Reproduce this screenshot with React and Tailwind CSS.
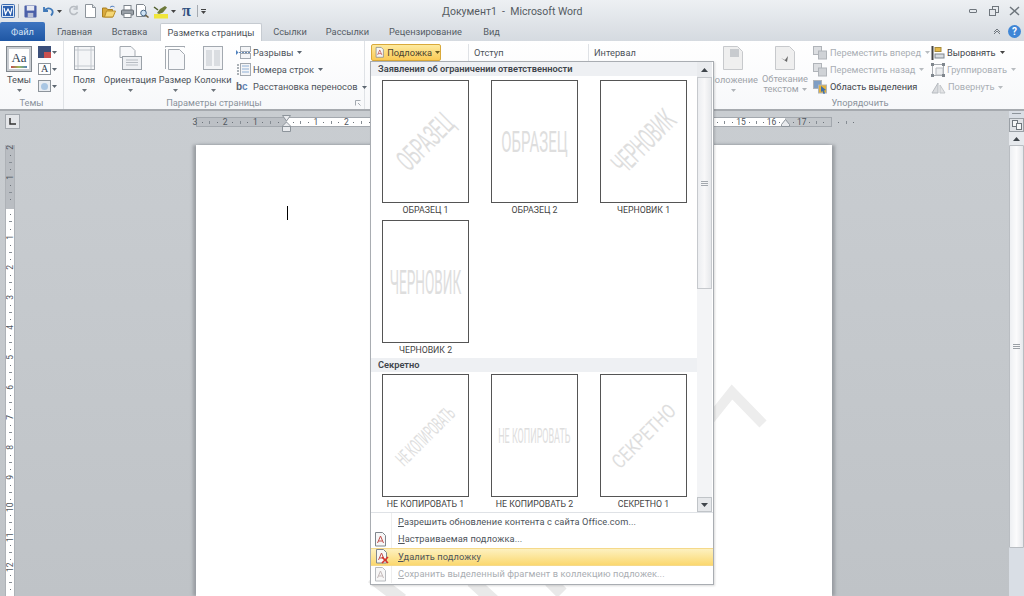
const Caret = ({ color = '#5c6670', className = '' }) => (
  <svg width="5" height="3" viewBox="0 0 5 3" className={`shrink-0 ${className}`}>
    <path d="M0 0h5L2.5 3z" fill={color} />
  </svg>
)

const WordIcon = () => (
  <svg width="14" height="14" viewBox="0 0 14 14" className="shrink-0">
    <rect x="0.5" y="0.5" width="13" height="13" rx="1" fill="#dbe6f5" stroke="#3a6bb0" />
    <rect x="2" y="2" width="10" height="10" fill="#2b5fae" />
    <path d="M3 4l1.5 6L7 5l2.5 5L11 4" fill="none" stroke="#fff" strokeWidth="1.2" />
  </svg>
)

const SaveIcon = () => (
  <svg width="13" height="13" viewBox="0 0 14 14" className="shrink-0">
    <rect x="0.5" y="0.5" width="13" height="13" rx="1" fill="#4a5fa8" />
    <rect x="3" y="1" width="8" height="5" fill="#e6e9f2" />
    <rect x="4" y="8.5" width="6" height="5" fill="#b9c0d6" />
  </svg>
)

const UndoIcon = ({ color }) => (
  <svg width="12" height="12" viewBox="0 0 12 12" className="shrink-0">
    <path d="M2 2v4h4M2.5 6C4 3 8 2.5 10 5c1 1.5.5 4-1 5.5" fill="none" stroke={color} strokeWidth="1.8" />
  </svg>
)

const RedoIcon = () => (
  <svg width="11" height="12" viewBox="0 0 11 12" className="shrink-0">
    <path d="M8.5 2.5A4 4 0 1 0 9.5 7M9 .5v3.5H5.5" fill="none" stroke="#b7bcc2" strokeWidth="1.6" />
  </svg>
)

const NewIcon = () => (
  <svg width="11" height="14" viewBox="0 0 11 14" className="shrink-0">
    <path d="M.5.5h7l3 3v10H.5z" fill="#fff" stroke="#8d949b" />
    <path d="M7.5.5v3h3" fill="#dfe3e8" stroke="#8d949b" />
  </svg>
)

const OpenIcon = () => (
  <svg width="14" height="13" viewBox="0 0 14 13" className="shrink-0">
    <path d="M.5 3h4l1 1.5h5v7.500H.5z" fill="#d9a93a" stroke="#a97f20" />
    <path d="M2.5 12l2-6h9l-2.5 6z" fill="#f6d774" stroke="#b98d2a" />
    <path d="M8 2.5C9 1 11 .8 12.5 2" fill="none" stroke="#4d7cc0" />
  </svg>
)

const PrintIcon = () => (
  <svg width="13" height="13" viewBox="0 0 13 13" className="shrink-0">
    <rect x="3" y="0.5" width="7" height="5" fill="#fff" stroke="#7f868d" />
    <rect x="0.5" y="5" width="12" height="5" rx="1" fill="#9aa1a8" stroke="#666d74" />
    <rect x="3" y="8.5" width="7" height="4" fill="#fff" stroke="#7f868d" />
  </svg>
)

const PreviewIcon = () => (
  <svg width="13" height="14" viewBox="0 0 13 14" className="shrink-0">
    <path d="M.5.5h7l2 2v10H.5z" fill="#fff" stroke="#7f868d" />
    <circle cx="7.5" cy="9" r="2.8" fill="#cfe3f5" stroke="#4a6a8a" />
    <path d="M9.5 11l3 2.5" stroke="#6b5a3a" strokeWidth="1.5" />
  </svg>
)

const PenIcon = () => (
  <svg width="16" height="15" viewBox="0 0 16 15" className="shrink-0">
    <rect x="1" y="10" width="14" height="4.5" fill="#f0e63a" />
    <path d="M4 9l3-4 5-3 2 1.5-4 5-4 1.500z" fill="#6d7a3a" />
    <path d="M1 3l4 3" stroke="#4f5d2a" strokeWidth="1.5" />
  </svg>
)

const ThemesIcon = () => (
  <div className="flex h-[26px] w-[26px] items-center justify-center border border-[#7f868d] bg-[#c9cdd2] p-[2px]">
    <div className="flex h-full w-full flex-col items-center justify-center bg-white font-['Liberation_Serif',serif] text-[13px] leading-none text-[#30404f]">
      Aa
      <span className="mt-[2px] h-[2px] w-[16px] bg-[linear-gradient(90deg,#c0504d,#9bbb59,#4f81bd)]" />
    </div>
  </div>
)

const MarginsIcon = () => (
  <svg width="21" height="24" viewBox="0 0 21 24">
    <rect x="0.5" y="0.5" width="20" height="23" fill="#f4f5f7" stroke="#a3a9b0" />
    <path d="M4 1v22M17 1v22M1 4h19M1 20h19" stroke="#c4c9cf" />
  </svg>
)

const OrientIcon = () => (
  <svg width="23" height="24" viewBox="0 0 23 24">
    <path d="M1 .5h11l4 4v7H1z" fill="#f7f8fa" stroke="#a3a9b0" />
    <rect x="3.5" y="10.5" width="19" height="13" fill="#eef0f3" stroke="#9aa1a8" />
    <path d="M7 14h12M7 16.5h12M7 19h12" stroke="#b7bcc2" />
  </svg>
)

const SizeIcon = () => (
  <svg width="20" height="24" viewBox="0 0 20 24">
    <path d="M0 .5h20M0 0v2M20 0v2" stroke="#a3a9b0" />
    <path d="M.5 3v20" stroke="#a3a9b0" />
    <path d="M3.5 3.5h11l5 5v15h-16z" fill="#f7f8fa" stroke="#a3a9b0" />
  </svg>
)

const ColumnsIcon = () => (
  <svg width="20" height="24" viewBox="0 0 20 24">
    <rect x="0.5" y="0.5" width="19" height="23" fill="#f4f5f7" stroke="#a3a9b0" />
    <path d="M3 5h6M3 7h6M3 9h6M3 11h6M3 13h6M3 15h6M3 17h6M3 19h6M11 5h6M11 7h6M11 9h6M11 11h6M11 13h6M11 15h6M11 17h6M11 19h6" stroke="#c0c5cb" />
  </svg>
)

const PageDisabledIcon = ({ glyph }) => (
  <svg width="20" height="24" viewBox="0 0 20 24">
    <path d="M.5.5h14l5 5v18H.5z" fill="#efefef" stroke="#c7c9cc" />
    {glyph === 'pos' && <rect x="7" y="3" width="9" height="8" fill="#c8cbcf" />}
    {glyph === 'wrap' && <path d="M6 12l4 2 3-4-1 6z" fill="#666" />}
  </svg>
)

const SmallRowIcon = ({ kind }) => {
  if (kind === 'breaks') {
    return (
      <svg width="15" height="13" viewBox="0 0 15 13" className="shrink-0">
        <rect x="4.5" y="0.5" width="10" height="5" fill="#f4f5f7" stroke="#a3a9b0" />
        <rect x="4.5" y="7.5" width="10" height="5" fill="#f4f5f7" stroke="#a3a9b0" />
        <path d="M0 6.5h15" stroke="#6b8cb5" strokeDasharray="2 1" />
        <path d="M0 4l2.5 2.5L0 9" fill="#4f81bd" />
      </svg>
    )
  }
  if (kind === 'lines') {
    return (
      <svg width="15" height="13" viewBox="0 0 15 13" className="shrink-0">
        <rect x="4.5" y="0.5" width="10" height="12" fill="#f4f5f7" stroke="#a3a9b0" />
        <path d="M1 2h2M1 5h2M1 8h2M1 11h2" stroke="#5b6670" />
        <path d="M6 3h7M6 6h7M6 9h7" stroke="#8fb0d6" />
      </svg>
    )
  }
  if (kind === 'hyphen') {
    return <span className="w-[15px] shrink-0 font-['Liberation_Sans',sans-serif] text-[10px] font-bold leading-none text-[#5a6470]">b<span className="text-[#5f86b8]">c</span></span>
  }
  const fill = kind === 'select' ? '#e3b23c' : '#cfd2d6'
  const back = kind === 'select' ? '#7f9ec4' : '#dcdee1'
  return (
    <svg width="15" height="14" viewBox="0 0 15 14" className="shrink-0">
      <rect x="0.5" y="0.5" width="8" height="8" fill={back} stroke="#b0b4b9" />
      <rect x="5.5" y="5" width="8" height="8" fill={fill} stroke="#b0b4b9" />
      {kind === 'select' && <path d="M8 6l5 4-2 .5 1 3-1.5.5-1-3-1.5 1z" fill="#3f6fa8" />}
    </svg>
  )
}

const ArrangeIcon = ({ kind }) => {
  if (kind === 'align') {
    return (
      <svg width="14" height="14" viewBox="0 0 14 14" className="shrink-0">
        <path d="M1.5 0v14" stroke="#444" strokeWidth="2" />
        <rect x="4" y="1.5" width="6" height="4" fill="#e5b84a" stroke="#a58a3a" />
        <rect x="4" y="8" width="9" height="4" fill="#d8dce1" stroke="#7f868d" />
      </svg>
    )
  }
  if (kind === 'group') {
    return (
      <svg width="14" height="14" viewBox="0 0 14 14" className="shrink-0">
        <rect x="1.5" y="1.5" width="11" height="11" fill="none" stroke="#a9adb2" />
        <path d="M5 5h7v7H5z" fill="#eceef0" stroke="#b7bbc0" />
        <path d="M0 0h3v3H0zM11 0h3v3h-3zM0 11h3v3H0zM11 11h3v3h-3z" fill="#7f868d" />
      </svg>
    )
  }
  return (
    <svg width="15" height="13" viewBox="0 0 15 13" className="shrink-0">
      <path d="M7 2L1 12h6z" fill="#dadcdf" stroke="#b7bbc0" />
      <path d="M9 4l5 8H9z" fill="#e4e5e7" stroke="#c2c5c9" />
    </svg>
  )
}

const BigButton = ({ width, label, icon, gray, caret = true }) => (
  <div className={`flex shrink-0 flex-col items-center pt-[5px] ${width}`}>
    <div className="flex h-[26px] items-start">{icon}</div>
    <div className={`mt-[2px] whitespace-nowrap text-center text-[9.25px] leading-[12px] ${gray ? 'text-[#9ea3a9]' : 'text-[#4d535a]'}`}>{label}</div>
    {caret && <Caret className="mt-[3px]" color={gray ? '#b0b4b9' : '#6d747b'} />}
  </div>
)

const SmallRow = ({ icon, label, color = 'text-[#4d535a]', caret = true, caretColor }) => (
  <div className="flex h-[17.5px] items-center whitespace-nowrap">
    {icon}
    <span className={`ml-[2px] text-[9.25px] leading-[12px] ${color}`}>{label}</span>
    {caret && <Caret className="ml-[4px]" color={caretColor} />}
  </div>
)

const GroupLabel = ({ children }) => (
  <div className="h-[13px] text-center text-[9.25px] leading-[13px] text-[#8a929b]">{children}</div>
)

const Tab = ({ label, width }) => (
  <div className={`shrink-0 text-center text-[9.25px] leading-[19px] text-[#555c64] ${width}`}>{label}</div>
)

const Ticks = ({ label, vertical }) => (
  <div className={`flex shrink-0 items-center ${vertical ? 'h-[30px] w-full flex-col' : 'h-full w-[30.3px]'}`}>
    <span className={`flex flex-1 items-center justify-center text-[8.5px] leading-none text-[#4f565d] ${vertical ? '-rotate-90' : ''}`}>{label}</span>
    <span className="flex flex-1 items-center justify-center"><i className="block h-px w-px bg-[#6d747b]" /></span>
    <span className="flex flex-1 items-center justify-center"><i className={`block bg-[#868d94] ${vertical ? 'h-px w-[3px]' : 'h-[3px] w-px'}`} /></span>
    <span className="flex flex-1 items-center justify-center"><i className="block h-px w-px bg-[#6d747b]" /></span>
  </div>
)

// cells under the open menu stay unnumbered
const H_CELLS = ['3', '2', '1', '', '1', '2', '', '', '', '', '', '', '', '', '', '', '', '', '15', '16', '17', '']
const V_NUMBERS = ['2', '1', '', '1', '2', '3', '4', '5', '6', '7', '8', '9', '10', '11', '12', '']

const Thumb = ({ name, mark, markClass }) => (
  <div className="flex w-[87px] flex-col items-center">
    <div className="flex h-[123px] w-[87px] items-center justify-center overflow-hidden border-[1.5px] border-[#555] bg-white">
      <span className={`shrink-0 whitespace-nowrap leading-none text-[#dedede] ${markClass}`}>{mark}</span>
    </div>
    <div className="h-[14px] whitespace-nowrap text-center text-[8.75px] leading-[14px] text-[#444]">{name}</div>
  </div>
)

const GalleryHeader = ({ children }) => (
  <div className="h-[14px] bg-[#eef0f3] pl-[7px] text-[9.25px] font-semibold leading-[14px] text-[#3f454b]">{children}</div>
)

const MenuItem = ({ icon, first, rest, active, disabled }) => (
  <div className={`flex h-[17.5px] items-center ${active ? 'border-y border-[#f5d98a] bg-[linear-gradient(#fdf1c0,#fbd86f)]' : ''}`}>
    <div className={`mr-[6px] flex h-full w-[21px] shrink-0 items-center justify-center ${active ? '' : 'border-r border-[#eeeeee]'}`}>{icon}</div>
    <span className={`whitespace-nowrap text-[9.25px] tracking-[0.1px] ${disabled ? 'text-[#a9adb2]' : 'text-[#4d535a]'}`}>
      <span className="underline">{first}</span>{rest}
    </span>
  </div>
)

const WatermarkDocIcon = ({ del, gray }) => (
  <svg width="14" height="15" viewBox="0 0 14 15">
    <path d="M1.5.5h7l3 3v10.500h-10z" fill="#f7f7f7" stroke={gray ? '#b8bbbf' : '#7f868d'} />
    <path d="M3.5 11l3-7 3 7M4.5 9h4" fill="none" stroke={gray ? '#c4b9b9' : '#c0504d'} />
    {del && <path d="M7 8l6 6M13 8l-6 6" stroke="#d8342a" strokeWidth="1.6" />}
  </svg>
)

const App = () => {
  return (
    <div className="relative flex h-[596px] w-[1024px] flex-col overflow-hidden bg-[#c5c9cd] font-['Roboto',sans-serif]">
      {/* title bar + tabs */}
      <div className="bg-[linear-gradient(#edf0f3,#d5dae0)]">
        <div className="flex h-[22px] items-center">
          <div className="flex w-[442px] shrink-0 items-center pl-[1px]">
            <WordIcon />
            <span className="ml-[3px] mr-[5px] h-[14px] w-px bg-[#b0b5ba]" />
            <SaveIcon />
            <span className="ml-[5px]"><UndoIcon color="#3f78b8" /></span>
            <Caret className="ml-[3px]" color="#444" />
            <span className="ml-[6px]"><RedoIcon /></span>
            <span className="ml-[6px]"><NewIcon /></span>
            <span className="ml-[6px]"><OpenIcon /></span>
            <span className="ml-[5px]"><PrintIcon /></span>
            <span className="ml-[2px]"><PreviewIcon /></span>
            <span className="ml-[4px]"><PenIcon /></span>
            <Caret className="ml-[2px]" color="#444" />
            <span className="ml-[6px] font-['Liberation_Serif',serif] text-[16px] font-bold leading-none text-[#2f4f7f]">π</span>
            <span className="ml-[6px] h-[12px] w-px bg-[#a5aab0]" />
            <div className="ml-[3px] flex flex-col items-center gap-px"><span className="h-px w-[5px] bg-[#444]" /><Caret color="#444" /></div>
          </div>
          <span className="mt-[1px] whitespace-pre text-[10.5px] text-[#555b62]">Документ1  -  Microsoft Word</span>
          <div className="ml-auto flex items-center pr-[4px]">
            <span className="h-[4px] w-[8px] rounded-[1px] border border-[#6f767d]" />
            <svg width="10" height="10" viewBox="0 0 10 10" className="ml-[12px]">
              <rect x="3.5" y="0.5" width="6" height="6" fill="none" stroke="#6f767d" />
              <rect x="0.5" y="3.5" width="6" height="6" fill="#e5e8ec" stroke="#6f767d" />
            </svg>
            <svg width="11" height="10" viewBox="0 0 11 10" className="ml-[10px]">
              <path d="M1 1l9 8M10 1L1 9" stroke="#6f767d" strokeWidth="1.5" />
            </svg>
          </div>
        </div>
        <div className="flex h-[19px] items-end">
          <div className="h-[19px] w-[45px] shrink-0 rounded-t-[2px] bg-[linear-gradient(#3d74c0,#1f57a4)] text-center text-[9.25px] leading-[19px] text-[#d5e3f5]">Файл</div>
          <Tab label="Главная" width="ml-[5px] w-[49px]" />
          <Tab label="Вставка" width="w-[61px]" />
          <div className="h-[18px] w-[102px] shrink-0 rounded-t-[2px] border border-b-0 border-[#c6cbd1] bg-white text-center text-[9.25px] leading-[17px] text-[#4d535a]">Разметка страницы</div>
          <Tab label="Ссылки" width="w-[56px]" />
          <Tab label="Рассылки" width="w-[59px]" />
          <Tab label="Рецензирование" width="w-[97px]" />
          <Tab label="Вид" width="w-[35px]" />
          <div className="ml-auto flex h-[19px] items-center pr-[3px]">
            <svg width="8" height="6" viewBox="0 0 8 6">
              <path d="M1 5l3-3 3 3M1 3l3-3 3 3" fill="none" stroke="#6f767d" />
            </svg>
            <span className="ml-[7px] flex h-[13px] w-[13px] items-center justify-center rounded-full bg-[#3f86d6] text-[10px] font-bold leading-none text-white">?</span>
          </div>
        </div>
      </div>

      {/* ribbon */}
      <div className="flex h-[70px] shrink-0 border-b-2 border-[#a6aaaf] bg-[linear-gradient(#ffffff,#f7f8fa)]">
        <div className="flex w-[64px] shrink-0 flex-col border-r border-[#dfe2e6]">
          <div className="flex h-[55px] pl-[6px]">
            <BigButton width="w-[26px]" label="Темы" icon={<ThemesIcon />} />
            <div className="ml-[6px] flex flex-col gap-[5px] pt-[5px]">
              <div className="flex items-center gap-[1px]">
                <svg width="13" height="12" viewBox="0 0 13 12"><rect width="13" height="6" fill="#3b4f7a" /><rect y="6" width="6" height="6" fill="#3b4f7a" /><rect x="6" y="6" width="7" height="6" fill="#c9504f" /></svg>
                <Caret />
              </div>
              <div className="flex items-center gap-[1px]">
                <span className="flex h-[12px] w-[13px] items-center justify-center border border-[#8d949b] bg-white font-['Liberation_Serif',serif] text-[10px] leading-none text-[#30404f]">A</span>
                <Caret />
              </div>
              <div className="flex items-center gap-[1px]">
                <span className="flex h-[12px] w-[13px] items-center justify-center border border-[#8d949b] bg-[#e9edf2]"><span className="h-[7px] w-[7px] rounded-full bg-[#a9c6e3]" /></span>
                <Caret />
              </div>
            </div>
          </div>
          <GroupLabel>Темы</GroupLabel>
        </div>

        <div className="flex w-[301px] shrink-0 flex-col border-r border-[#dfe2e6]">
          <div className="flex h-[55px] pl-[4px]">
            <BigButton width="w-[32px]" label="Поля" icon={<MarginsIcon />} />
            <BigButton width="w-[60px]" label="Ориентация" icon={<OrientIcon />} />
            <BigButton width="w-[30px]" label="Размер" icon={<SizeIcon />} />
            <BigButton width="w-[46px]" label="Колонки" icon={<ColumnsIcon />} />
            <div className="flex flex-col pt-[3px]">
              <SmallRow icon={<SmallRowIcon kind="breaks" />} label="Разрывы" />
              <SmallRow icon={<SmallRowIcon kind="lines" />} label="Номера строк" />
              <SmallRow icon={<SmallRowIcon kind="hyphen" />} label="Расстановка переносов" />
            </div>
          </div>
          <div className="relative">
            <GroupLabel>Параметры страницы</GroupLabel>
            <svg width="6" height="6" viewBox="0 0 6 6" className="absolute right-[3px] top-[4px]">
              <path d="M.5 5.500v-5h5M3 3l2.500 2.500" fill="none" stroke="#a3a9b0" />
            </svg>
          </div>
        </div>

        {/* fon + paragraph, mostly under the menu */}
        <div className="flex w-[340px] shrink-0 items-start pt-[3px] text-[9.25px] leading-[17px] text-[#4d535a]">
          <div className="ml-[6px] flex h-[17px] w-[70px] shrink-0 items-center rounded-[2px] border border-[#d9a93a] bg-[linear-gradient(#fdeaa0,#fbca55)] pl-[3px]">
            <WatermarkDocIcon />
            <span className="ml-[2px] text-[#4a4230]">Подложка</span>
            <Caret className="ml-[3px]" color="#6b5a20" />
          </div>
          <span className="ml-[27px] h-[17px] w-px shrink-0 bg-[#dfe2e6]" />
          <span className="ml-[5px] w-[114px] shrink-0">Отступ</span>
          <span className="h-[17px] w-px shrink-0 bg-[#dfe2e6]" />
          <span className="ml-[5px]">Интервал</span>
        </div>

        <div className="flex w-[310px] shrink-0 flex-col">
          <div className="flex h-[55px]">
            <BigButton width="w-[56px]" label="Положение" gray icon={<PageDisabledIcon glyph="pos" />} />
            <BigButton
              width="w-[48px]"
              gray
              caret={false}
              icon={<PageDisabledIcon glyph="wrap" />}
              label={<span className="block leading-[10px]">Обтекание<br /><span className="inline-flex items-center gap-[3px]">текстом <Caret color="#b0b4b9" /></span></span>}
            />
            <div className="ml-[4px] flex w-[118px] shrink-0 flex-col pt-[3px]">
              <SmallRow icon={<SmallRowIcon kind="forward" />} label="Переместить вперед" color="text-[#a9aeb4]" caretColor="#b8bcc0" />
              <SmallRow icon={<SmallRowIcon kind="back" />} label="Переместить назад" color="text-[#a9aeb4]" caretColor="#b8bcc0" />
              <SmallRow icon={<SmallRowIcon kind="select" />} label="Область выделения" caret={false} color="text-[#3f454b]" />
            </div>
            <div className="flex shrink-0 flex-col pt-[3px]">
              <SmallRow icon={<ArrangeIcon kind="align" />} label="Выровнять" color="text-[#3f454b]" caretColor="#444" />
              <SmallRow icon={<ArrangeIcon kind="group" />} label="Группировать" color="text-[#a9aeb4]" caretColor="#b8bcc0" />
              <SmallRow icon={<ArrangeIcon kind="rotate" />} label="Повернуть" color="text-[#a9aeb4]" caretColor="#b8bcc0" />
            </div>
          </div>
          <GroupLabel>Упорядочить</GroupLabel>
        </div>
      </div>

      {/* work area */}
      <div className="flex min-h-0 flex-1 bg-[linear-gradient(#c9cdd1,#bfc3c7)]">
        <div className="flex w-[196px] shrink-0 flex-col pl-[5px] pt-[3px]">
          <div className="flex h-[15px] w-[15px] items-center justify-center border border-[#a3a8ae] bg-[#e4e6e9]">
            <svg width="7" height="7" viewBox="0 0 7 7"><path d="M1 0v6h6" fill="none" stroke="#333" strokeWidth="1.5" /></svg>
          </div>
          <div className="relative mt-[16px] h-[452px] w-[10px] overflow-hidden border-x border-[#aeb2b7]">
            <div className="h-[64px] bg-[#b9bdc2]" />
            <div className="h-full bg-white" />
            <div className="absolute inset-x-0 top-[-2px] flex flex-col">
              {V_NUMBERS.map((n, i) => <Ticks key={i} label={n} vertical />)}
            </div>
          </div>
        </div>

        <div className="flex w-[636px] shrink-0 flex-col">
          <div className="relative mt-[6px] flex h-[10px] shrink-0 border border-[#a3a8ae]">
            <div className="w-[90px] shrink-0 bg-[#bcc0c5]" />
            <div className="w-[498px] shrink-0 bg-white" />
            <div className="flex-1 bg-[#c3c7cb]" />
            <div className="absolute inset-y-0 left-[-6px] flex">
              {H_CELLS.map((n, i) => <Ticks key={i} label={n} />)}
            </div>
            <svg width="9" height="18" viewBox="0 0 9 18" className="absolute left-[85px] top-[-3px]">
              <path d="M.5.5h8L4.5 6zM4.500 7l4 4v5.500h-8V11z" fill="#e8eaed" stroke="#8d949b" />
              <path d="M.5 11.500h8" stroke="#8d949b" />
            </svg>
            <svg width="9" height="8" viewBox="0 0 9 8" className="absolute left-[584px] top-[1px]">
              <path d="M4.5.5l4 5v2h-8v-2z" fill="#e8eaed" stroke="#8d949b" />
            </svg>
          </div>
          <div className="relative mt-[18px] flex-1 bg-white pl-[91px] pt-[61px] shadow-[-3px_0_3px_#9a9ea3,3px_0_3px_#9a9ea3]">
            <svg width="636" height="451" viewBox="0 0 636 451" className="absolute left-0 top-0">
              <path d="M500 292L536 247L567 279" fill="none" stroke="#ededed" strokeWidth="10" />
              <path d="M176 432L206 455M276 436L300 458M354 436L366 448" fill="none" stroke="#e9e9e9" strokeWidth="13" />
            </svg>
            <div className="h-[14px] w-px bg-black" />
          </div>
        </div>

        <div className="flex flex-1 justify-end">
          <div className="flex w-[15px] flex-col bg-[#d9dee5]">
            <span className="mx-[3px] mt-[2px] h-px bg-[#8d949b]" />
            <div className="mt-[4px] flex h-[14px] items-center justify-center border border-[#9aa0a6] bg-[#dfe2e6]">
              <svg width="10" height="10" viewBox="0 0 10 10">
                <rect x="0.5" y="0.5" width="5" height="6" fill="#f5f6f7" stroke="#6f767d" />
                <rect x="4.5" y="3.5" width="5" height="6" fill="#f5f6f7" stroke="#6f767d" />
              </svg>
            </div>
            <div className="flex h-[13px] items-center justify-center bg-[#e6e9ed]">
              <svg width="7" height="4" viewBox="0 0 7 4"><path d="M3.5 0L7 4H0z" fill="#3f454b" /></svg>
            </div>
            <div className="flex h-[403px] items-center justify-center rounded-[1px] border border-[#b9bdc2] bg-[linear-gradient(90deg,#eef0f3,#fbfbfc,#e6e8ec)]">
              <div className="flex w-[7px] flex-col gap-px">
                <span className="h-px bg-[#9aa0a6]" />
                <span className="h-px bg-[#9aa0a6]" />
                <span className="h-px bg-[#9aa0a6]" />
              </div>
            </div>
          </div>
        </div>
      </div>

      {/* watermark dropdown */}
      <div className="absolute left-[370px] top-[61px] flex h-[524px] w-[344px] flex-col border border-[#a9adb2] bg-white shadow-[1px_1px_2px_rgba(0,0,0,0.15)]">
        <div className="flex h-[450px] shrink-0">
          <div className="h-full w-[326px] shrink-0 overflow-hidden">
            <GalleryHeader>Заявления об ограничении ответственности</GalleryHeader>
            <div className="grid grid-cols-[87px_87px_87px] gap-x-[22px] gap-y-[3px] pl-[11px] pt-[4px]">
              <Thumb name="ОБРАЗЕЦ 1" mark="ОБРАЗЕЦ" markClass="text-[30px] -rotate-45 scale-x-[0.5]" />
              <Thumb name="ОБРАЗЕЦ 2" mark="ОБРАЗЕЦ" markClass="text-[30px] scale-x-[0.5]" />
              <Thumb name="ЧЕРНОВИК 1" mark="ЧЕРНОВИК" markClass="text-[30px] -rotate-45 scale-x-[0.48]" />
              <Thumb name="ЧЕРНОВИК 2" mark="ЧЕРНОВИК" markClass="text-[34px] scale-x-[0.4]" />
            </div>
            <div className="mt-[1px]">
              <GalleryHeader>Секретно</GalleryHeader>
            </div>
            <div className="grid grid-cols-[87px_87px_87px] gap-x-[22px] pl-[11px] pt-[2px]">
              <Thumb name="НЕ КОПИРОВАТЬ 1" mark="НЕ КОПИРОВАТЬ" markClass="text-[20px] -rotate-45 scale-x-[0.46]" />
              <Thumb name="НЕ КОПИРОВАТЬ 2" mark="НЕ КОПИРОВАТЬ" markClass="text-[20px] scale-x-[0.45]" />
              <Thumb name="СЕКРЕТНО 1" mark="СЕКРЕТНО" markClass="text-[20px] -rotate-45 scale-x-[0.8]" />
            </div>
          </div>
          <div className="flex w-[15px] shrink-0 flex-col bg-[#f3f4f6]">
            <div className="flex h-[15px] shrink-0 items-center justify-center bg-[#e9ebee]">
              <svg width="7" height="4" viewBox="0 0 7 4"><path d="M3.5 0L7 4H0z" fill="#3f454b" /></svg>
            </div>
            <div className="flex h-[212px] shrink-0 items-center justify-center border border-[#c6c9cd] bg-[linear-gradient(90deg,#eceef1,#f8f8f9,#e6e8eb)]">
              <div className="flex w-[7px] flex-col gap-px">
                <span className="h-px bg-[#a3a8ae]" />
                <span className="h-px bg-[#a3a8ae]" />
                <span className="h-px bg-[#a3a8ae]" />
              </div>
            </div>
            <div className="mt-auto flex h-[15px] shrink-0 items-center justify-center border border-[#c0c4c8] bg-[#e6e8eb]">
              <svg width="7" height="4" viewBox="0 0 7 4"><path d="M0 0h7L3.5 4z" fill="#3f454b" /></svg>
            </div>
          </div>
        </div>
        <div className="h-px shrink-0 bg-[#dfe2e6]" />
        <div className="flex flex-1 flex-col">
          <MenuItem first="Р" rest="азрешить обновление контента с сайта Office.com..." />
          <MenuItem first="Н" rest="астраиваемая подложка..." icon={<WatermarkDocIcon />} />
          <MenuItem first="У" rest="далить подложку" active icon={<WatermarkDocIcon del />} />
          <MenuItem first="С" rest="охранить выделенный фрагмент в коллекцию подложек..." disabled icon={<WatermarkDocIcon gray />} />
        </div>
      </div>
    </div>
  )
}

export default App
